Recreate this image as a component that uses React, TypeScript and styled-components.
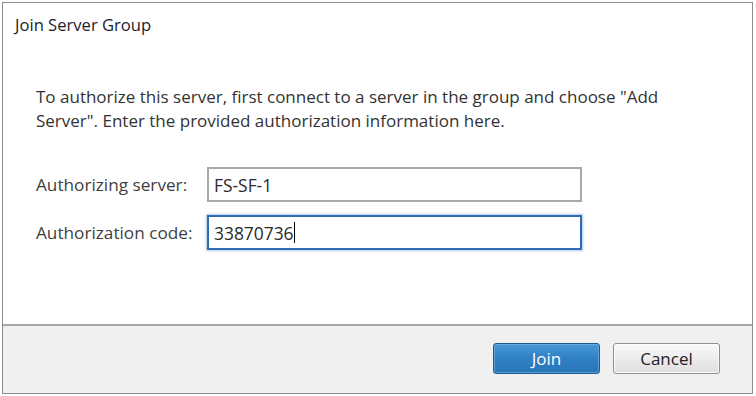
import React from "react";
import styled, { createGlobalStyle } from "styled-components";

const GlobalStyle = createGlobalStyle`
  html, body {
    margin: 0;
    padding: 0;
    background: #ffffff;
  }
  body {
    font-family: "Open Sans", "Noto Sans", "Liberation Sans", sans-serif;
  }
`;

const Page = styled.div`
  width: 756px;
  height: 396px;
  padding: 2px 0 0 2px;
  box-sizing: border-box;
  background: #ffffff;
`;

const Dialog = styled.div`
  width: 751px;
  height: 392px;
  box-sizing: border-box;
  border: 1px solid #8c8c8c;
  display: flex;
  flex-direction: column;
  background: #ffffff;
`;

const Title = styled.div`
  padding: 12px 0 0 12px;
  height: 52px;
  box-sizing: border-box;
  font-size: 16.6px;
  line-height: 20px;
  color: #1b1b2f;
`;

const Content = styled.div`
  flex: 1;
  padding: 30px 0 0 33px;
  display: flex;
  flex-direction: column;
`;

const Message = styled.p`
  margin: 0;
  font-size: 17px;
  line-height: 24px;
  color: #333333;
`;

const Form = styled.div`
  margin-top: 34px;
  display: grid;
  grid-template-columns: 171px 375px;
  row-gap: 13px;
  align-items: center;
`;

const Label = styled.label`
  font-size: 17.2px;
  color: #3f3f3f;
`;

const Field = styled.div<{ $focused?: boolean }>`
  height: 35px;
  box-sizing: border-box;
  border: ${(p) => (p.$focused ? "2px solid #2f6db3" : "2px solid #a9a9a9")};
  box-shadow: ${(p) => (p.$focused ? "0 0 2px 1px rgba(120,170,220,0.6)" : "none")};
  padding: 0 5px;
  display: flex;
  align-items: center;
  font-size: 17.4px;
  color: #2a2a2a;
  background: #ffffff;
`;

const Caret = styled.span`
  display: inline-block;
  width: 1.5px;
  height: 21px;
  background: #000000;
  margin-left: 0px;
`;

const Footer = styled.div`
  height: 69px;
  box-sizing: border-box;
  border-top: 2px solid #a8a8a8;
  background: #f0f0f0;
  display: flex;
  justify-content: flex-end;
  align-items: center;
  gap: 13px;
  padding: 0 32px 2px 0;
`;

const Button = styled.button<{ $primary?: boolean }>`
  width: 107px;
  height: 31px;
  box-sizing: border-box;
  border-radius: 3px;
  font-family: inherit;
  font-size: 17px;
  padding: 0 0 1px 0;
  cursor: pointer;
  border: 1px solid ${(p) => (p.$primary ? "#1d5a92" : "#8f8f8f")};
  color: ${(p) => (p.$primary ? "#ffffff" : "#222222")};
  background: ${(p) =>
    p.$primary
      ? "linear-gradient(#4a9ad6, #2f80c4 50%, #2a76b8)"
      : "linear-gradient(#fafafa, #ececec 50%, #dedede)"};
  box-shadow: inset 0 0 0 1px ${(p) => (p.$primary ? "rgba(120,180,230,0.6)" : "rgba(255,255,255,0.8)")};
`;

export default function App() {
  return (
    <>
      <GlobalStyle />
      <Page>
        <Dialog>
          <Title>Join Server Group</Title>
          <Content>
            <Message>
              To authorize this server, first connect to a server in the group and choose "Add
              <br />
              Server". Enter the provided authorization information here.
            </Message>
            <Form>
              <Label>Authorizing server:</Label>
              <Field>FS-SF-1</Field>
              <Label>Authorization code:</Label>
              <Field $focused>
                33870736
                <Caret />
              </Field>
            </Form>
          </Content>
          <Footer>
            <Button $primary>Join</Button>
            <Button>Cancel</Button>
          </Footer>
        </Dialog>
      </Page>
    </>
  );
}
